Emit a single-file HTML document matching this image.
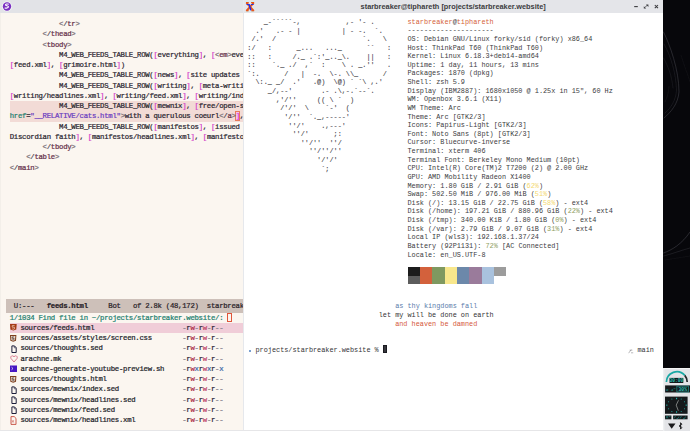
<!DOCTYPE html><html><head><meta charset="utf-8"><style>
*{margin:0;padding:0;box-sizing:border-box}
html,body{width:690px;height:431px;overflow:hidden;background:#09090d}
body{position:relative;font-family:"Liberation Mono",monospace}
.abs{position:absolute}
pre{font-family:"Liberation Mono",monospace;font-size:6.85px;white-space:pre;position:absolute;margin:0}
#emacs pre{-webkit-text-stroke:0.22px currentColor;font-size:7.3px;letter-spacing:-0.273px}
.tb{position:absolute;left:0;top:0;height:12.6px;background:#e4e5e9}
.tg{color:#7a7078}.sl{color:#4a4450}.tn{color:#66304a}.br{color:#d33fc8}.d{color:#2b2630}.at{color:#23806f}.st{color:#6a3cc0}.pm{color:#e030e0}
</style></head><body>

<svg class="abs" style="left:663px;top:0" width="27" height="431" viewBox="663 0 27 431">
<rect x="663" y="0" width="27" height="431" fill="#07070b"/>
<defs><filter id="bl" x="-50%" y="-50%" width="200%" height="200%"><feGaussianBlur stdDeviation="0.6"/></filter></defs><g fill="none" stroke="#4a4a52" stroke-linecap="round" filter="url(#bl)">
<path d="M663.5 32 C670 45, 679 70, 679 92 C678 104, 671 112, 664 118" stroke-width="0.9" opacity="0.55"/>
<path d="M664 44 C671 56, 676 74, 676.5 90 C676 100, 671 108, 665 113" stroke-width="0.6" opacity="0.4"/>
<path d="M663.5 58 C668 66, 672 76, 673 88" stroke-width="0.6" opacity="0.35"/>
<path d="M665 102 C667 98, 669 92, 669 86" stroke-width="0.5" opacity="0.3"/>
<path d="M681 55 C684 65, 688 75, 690 82" stroke-width="0.5" opacity="0.25"/>
<path d="M663.5 253 C672 250, 682 244, 690 232" stroke-width="1" opacity="0.5"/>
<path d="M663.5 256 C672 254, 682 250, 690 248" stroke-width="0.7" opacity="0.45"/>
<path d="M665 260 C673 259, 682 257, 690 256" stroke-width="0.5" opacity="0.25"/>
</g></svg>

<div id="emacs" class="abs" style="left:0;top:0;width:243px;height:431px;background:#fbf6f0;overflow:hidden">
<div class="abs" style="left:0;top:0;width:1.3px;height:431px;background:#f3efe9"></div>
<div class="abs" style="left:9.75px;top:101.1px;width:240px;height:20.7px;background:#f2dbd6"></div>
<div class="abs" style="left:235.3px;top:111.4px;width:4.5px;height:9.2px;background:#f3c4e6;border:0.5px solid #e87a5a"></div>
<pre class="ec" style="left:9.75px;top:19.26px;line-height:10.23px;color:#2b2630">
            <span class="tg">&lt;</span><span class="sl">/</span><span class="tn">tr</span><span class="tg">&gt;</span>
        <span class="tg">&lt;</span><span class="sl">/</span><span class="tn">thead</span><span class="tg">&gt;</span>
        <span class="tg">&lt;</span><span class="tn">tbody</span><span class="tg">&gt;</span>
<span class="d">            M4_WEB_FEEDS_TABLE_ROW(</span><span class="br">[</span><span class="d">everything</span><span class="br">]</span><span class="d">, </span><span class="br">[</span><span class="tg">&lt;</span><span class="tn">em</span><span class="tg">&gt;</span><span class="d">everything</span>
<span class="br">[</span><span class="d">feed.xml</span><span class="br">]</span><span class="d">, </span><span class="br">[</span><span class="d">grimoire.html</span><span class="br">]</span><span class="d">)</span>
<span class="d">            M4_WEB_FEEDS_TABLE_ROW(</span><span class="br">[</span><span class="d">news</span><span class="br">]</span><span class="d">, </span><span class="br">[</span><span class="d">site updates and more</span>
<span class="d">            M4_WEB_FEEDS_TABLE_ROW(</span><span class="br">[</span><span class="d">writing</span><span class="br">]</span><span class="d">, </span><span class="br">[</span><span class="d">meta-writing</span>
<span class="br">[</span><span class="d">writing/headlines.xml</span><span class="br">]</span><span class="d">, </span><span class="br">[</span><span class="d">writing/feed.xml</span><span class="br">]</span><span class="d">, </span><span class="br">[</span><span class="d">writing/index</span>
<span class="d">            M4_WEB_FEEDS_TABLE_ROW(</span><span class="br">[</span><span class="d">mewnix</span><span class="br">]</span><span class="d">, </span><span class="br">[</span><span class="d">free/open-source</span>
<span class="at">href</span><span class="d">=</span><span class="st">"__RELATIVE/cats.html"</span><span class="tg">&gt;</span><span class="d">with a querulous coeurl</span><span class="tg">&lt;</span><span class="sl">/</span><span class="tn">a</span><span class="tg">&gt;</span><span class="pm">]</span><span class="d">,</span>
<span class="d">            M4_WEB_FEEDS_TABLE_ROW(</span><span class="br">[</span><span class="d">manifestos</span><span class="br">]</span><span class="d">, </span><span class="br">[</span><span class="d">issued by</span>
<span class="d">Discordian faith</span><span class="br">]</span><span class="d">, </span><span class="br">[</span><span class="d">manifestos/headlines.xml</span><span class="br">]</span><span class="d">, </span><span class="br">[</span><span class="d">manifestos</span>
        <span class="tg">&lt;</span><span class="sl">/</span><span class="tn">tbody</span><span class="tg">&gt;</span>
    <span class="tg">&lt;</span><span class="sl">/</span><span class="tn">table</span><span class="tg">&gt;</span>
<span class="tg">&lt;</span><span class="sl">/</span><span class="tn">main</span><span class="tg">&gt;</span>
</pre>
<div class="abs" style="left:6.3px;top:298.8px;width:240px;height:13.9px;background:#cdc0b9"></div>
<pre style="left:9.75px;top:300.1px;line-height:13.9px;color:#2a2228"> U:---   <b>feeds.html</b>     Bot   of 2.8k (48,172)  starbreaker</pre>
<pre style="left:9.75px;top:312.7px;line-height:10.23px;color:#23806f">1/1034 Find file in ~/projects/starbreaker.website/: </pre>
<div class="abs" style="left:227.4px;top:312.5px;width:4.3px;height:9px;border:0.8px solid #e0553a"></div>
<div class="abs" style="left:9.75px;top:322.9px;width:240px;height:10.23px;background:#f0cdd8"></div>
<svg class="abs" style="left:10px;top:324.0px" width="7" height="8" viewBox="0 0 7 8"><path d="M0 0.1H6.7L6.3 5.6L3.35 6.5L0.4 5.6Z" fill="#a43a14"/><path d="M4.6 1.6H2.2V3.2H4.4V4.9L3.35 5.3L2.2 4.9" fill="none" stroke="#ecc4b0" stroke-width="0.8"/></svg>
<pre style="left:20.4px;top:322.9px;line-height:10.23px;color:#231f2a">sources/feeds.html</pre>
<pre style="left:182.244px;top:322.9px;line-height:10.23px"><span style="color:#8a8590">-</span><span style="color:#2a2535">r</span><span style="color:#b0304a">w</span><span style="color:#8a8590">-</span><span style="color:#2a2535">r</span><span style="color:#c04a6a">w</span><span style="color:#8a8590">-</span><span style="color:#2a2535">r</span><span style="color:#8a8590">-</span><span style="color:#8a8590">-</span></pre>
<svg class="abs" style="left:10.2px;top:334.63px" width="7" height="8" viewBox="0 0 7 8"><path d="M0 0.1H6.4L6 5.7L3.2 6.7L0.4 5.7Z" fill="#7e3e1c"/><path d="M1.1 1.1H5.3L5 5L3.2 5.7L1.4 5Z" fill="#f6eee8"/><path d="M4.3 1.9H2.2V3.3H4.1V4.6L3.2 4.9L2.3 4.6" fill="none" stroke="#4a2a18" stroke-width="0.75"/></svg>
<pre style="left:20.4px;top:333.13px;line-height:10.23px;color:#231f2a">sources/assets/styles/screen.css</pre>
<pre style="left:182.244px;top:333.13px;line-height:10.23px"><span style="color:#8a8590">-</span><span style="color:#2a2535">r</span><span style="color:#b0304a">w</span><span style="color:#8a8590">-</span><span style="color:#2a2535">r</span><span style="color:#c04a6a">w</span><span style="color:#8a8590">-</span><span style="color:#2a2535">r</span><span style="color:#8a8590">-</span><span style="color:#8a8590">-</span></pre>
<svg class="abs" style="left:10.6px;top:344.65999999999997px" width="7" height="9" viewBox="0 0 7 9"><path d="M0.9 0.9H3.5L5.2 2.6V7.5H0.9Z" fill="none" stroke="#1c1e3a" stroke-width="1"/><path d="M3.3 1V2.8H5" fill="none" stroke="#1c1e3a" stroke-width="0.6"/></svg>
<pre style="left:20.4px;top:343.35999999999996px;line-height:10.23px;color:#231f2a">sources/thoughts.sed</pre>
<pre style="left:182.244px;top:343.35999999999996px;line-height:10.23px"><span style="color:#8a8590">-</span><span style="color:#2a2535">r</span><span style="color:#b0304a">w</span><span style="color:#8a8590">-</span><span style="color:#2a2535">r</span><span style="color:#c04a6a">w</span><span style="color:#8a8590">-</span><span style="color:#2a2535">r</span><span style="color:#8a8590">-</span><span style="color:#8a8590">-</span></pre>
<svg class="abs" style="left:10px;top:354.78999999999996px" width="8" height="8" viewBox="0 0 8 8"><path d="M4 7L1 3.5C0.3 2 1.2 0.8 2.4 0.8C3.2 0.8 3.7 1.3 4 2C4.3 1.3 4.8 0.8 5.6 0.8C6.8 0.8 7.7 2 7 3.5Z" fill="none" stroke="#d0607a" stroke-width="0.8"/></svg>
<pre style="left:20.4px;top:353.59px;line-height:10.23px;color:#231f2a">arachne.mk</pre>
<pre style="left:182.244px;top:353.59px;line-height:10.23px"><span style="color:#8a8590">-</span><span style="color:#2a2535">r</span><span style="color:#b0304a">w</span><span style="color:#8a8590">-</span><span style="color:#2a2535">r</span><span style="color:#c04a6a">w</span><span style="color:#8a8590">-</span><span style="color:#2a2535">r</span><span style="color:#8a8590">-</span><span style="color:#8a8590">-</span></pre>
<svg class="abs" style="left:10px;top:365.02px" width="7" height="8" viewBox="0 0 7 8"><rect x="0" y="0.5" width="7" height="6.5" fill="#4616c2"/><path d="M1.5 2.2L3 3.5L1.5 4.8" fill="none" stroke="#fff" stroke-width="0.7"/></svg>
<pre style="left:20.4px;top:363.82px;line-height:10.23px;color:#231f2a">arachne-generate-youtube-preview.sh</pre>
<pre style="left:182.244px;top:363.82px;line-height:10.23px"><span style="color:#8a8590">-</span><span style="color:#2a2535">r</span><span style="color:#b0304a">w</span><span style="color:#3a68a8">x</span><span style="color:#2a2535">r</span><span style="color:#c04a6a">w</span><span style="color:#3a68a8">x</span><span style="color:#2a2535">r</span><span style="color:#8a8590">-</span><span style="color:#3a68a8">x</span></pre>
<svg class="abs" style="left:10.2px;top:375.54999999999995px" width="7" height="8" viewBox="0 0 7 8"><path d="M0 0.1H6.4L6 5.7L3.2 6.7L0.4 5.7Z" fill="#7e3e1c"/><path d="M1.1 1.1H5.3L5 5L3.2 5.7L1.4 5Z" fill="#f6eee8"/><path d="M4.3 1.9H2.2V3.3H4.1V4.6L3.2 4.9L2.3 4.6" fill="none" stroke="#4a2a18" stroke-width="0.75"/></svg>
<pre style="left:20.4px;top:374.04999999999995px;line-height:10.23px;color:#231f2a">sources/thoughts.html</pre>
<pre style="left:182.244px;top:374.04999999999995px;line-height:10.23px"><span style="color:#8a8590">-</span><span style="color:#2a2535">r</span><span style="color:#b0304a">w</span><span style="color:#8a8590">-</span><span style="color:#2a2535">r</span><span style="color:#c04a6a">w</span><span style="color:#8a8590">-</span><span style="color:#2a2535">r</span><span style="color:#8a8590">-</span><span style="color:#8a8590">-</span></pre>
<svg class="abs" style="left:10.6px;top:385.58px" width="7" height="9" viewBox="0 0 7 9"><path d="M0.9 0.9H3.5L5.2 2.6V7.5H0.9Z" fill="none" stroke="#1c1e3a" stroke-width="1"/><path d="M3.3 1V2.8H5" fill="none" stroke="#1c1e3a" stroke-width="0.6"/></svg>
<pre style="left:20.4px;top:384.28px;line-height:10.23px;color:#231f2a">sources/mewnix/index.sed</pre>
<pre style="left:182.244px;top:384.28px;line-height:10.23px"><span style="color:#8a8590">-</span><span style="color:#2a2535">r</span><span style="color:#b0304a">w</span><span style="color:#8a8590">-</span><span style="color:#2a2535">r</span><span style="color:#c04a6a">w</span><span style="color:#8a8590">-</span><span style="color:#2a2535">r</span><span style="color:#8a8590">-</span><span style="color:#8a8590">-</span></pre>
<svg class="abs" style="left:10.6px;top:395.81px" width="7" height="9" viewBox="0 0 7 9"><path d="M0.9 0.9H3.5L5.2 2.6V7.5H0.9Z" fill="none" stroke="#1c1e3a" stroke-width="1"/><path d="M3.3 1V2.8H5" fill="none" stroke="#1c1e3a" stroke-width="0.6"/></svg>
<pre style="left:20.4px;top:394.51px;line-height:10.23px;color:#231f2a">sources/mewnix/headlines.sed</pre>
<pre style="left:182.244px;top:394.51px;line-height:10.23px"><span style="color:#8a8590">-</span><span style="color:#2a2535">r</span><span style="color:#b0304a">w</span><span style="color:#8a8590">-</span><span style="color:#2a2535">r</span><span style="color:#c04a6a">w</span><span style="color:#8a8590">-</span><span style="color:#2a2535">r</span><span style="color:#8a8590">-</span><span style="color:#8a8590">-</span></pre>
<svg class="abs" style="left:10.6px;top:406.04px" width="7" height="9" viewBox="0 0 7 9"><path d="M0.9 0.9H3.5L5.2 2.6V7.5H0.9Z" fill="none" stroke="#1c1e3a" stroke-width="1"/><path d="M3.3 1V2.8H5" fill="none" stroke="#1c1e3a" stroke-width="0.6"/></svg>
<pre style="left:20.4px;top:404.74px;line-height:10.23px;color:#231f2a">sources/mewnix/feed.sed</pre>
<pre style="left:182.244px;top:404.74px;line-height:10.23px"><span style="color:#8a8590">-</span><span style="color:#2a2535">r</span><span style="color:#b0304a">w</span><span style="color:#8a8590">-</span><span style="color:#2a2535">r</span><span style="color:#c04a6a">w</span><span style="color:#8a8590">-</span><span style="color:#2a2535">r</span><span style="color:#8a8590">-</span><span style="color:#8a8590">-</span></pre>
<svg class="abs" style="left:10.2px;top:415.77px" width="7" height="9" viewBox="0 0 7 9"><path d="M1 0.6H4.2L6 2.4V8.4H1Z" fill="none" stroke="#c4483a" stroke-width="0.9"/><path d="M2.2 4.3L3.7 6.5M3.7 4.3L2.2 6.5" stroke="#c4483a" stroke-width="0.6"/></svg>
<pre style="left:20.4px;top:414.96999999999997px;line-height:10.23px;color:#231f2a">sources/mewnix/headlines.xml</pre>
<pre style="left:182.244px;top:414.96999999999997px;line-height:10.23px"><span style="color:#8a8590">-</span><span style="color:#2a2535">r</span><span style="color:#b0304a">w</span><span style="color:#8a8590">-</span><span style="color:#2a2535">r</span><span style="color:#c04a6a">w</span><span style="color:#8a8590">-</span><span style="color:#2a2535">r</span><span style="color:#8a8590">-</span><span style="color:#8a8590">-</span></pre>
<div class="tb" style="width:243px;background:#e2e3e7"></div>
<svg class="abs" style="left:1px;top:0.3px" width="12" height="12" viewBox="-1 -1 12 12"><circle cx="5" cy="5.5" r="5.1" fill="#f4f4f8"/><circle cx="5" cy="5.5" r="4.2" fill="#7a30c0"/><path d="M6.8 3.3C5.4 2.8 3.4 3 3.5 3.9C3.6 4.8 6.5 4.6 6.5 5.8C6.5 7 4 7.3 2.6 7" fill="none" stroke="#fff" stroke-width="1.1"/></svg>
</div>
<div class="abs" style="left:243px;top:0;width:1.2px;height:431px;background:#e6e8ec"></div>
<div class="abs" style="left:244px;top:0;width:419px;height:431px;background:#ffffff;overflow:hidden">
<div class="tb" style="width:419px"></div>
<svg class="abs" style="left:1.1px;top:0.9px" width="10.6" height="11" viewBox="0.3 0 11 11.4" preserveAspectRatio="none">
<path d="M1.3 0.8H4.5M6.3 0.8H9.8M1.3 10.9H4.5M6.3 10.9H9.8" stroke="#c4f2f6" stroke-width="0.9"/>
<path d="M1.8 1.8L9.3 10.2M9.3 1.8L1.8 10.2" stroke="#e8561a" stroke-width="2"/>
<path d="M1.3 1.6H4.2M6.6 1.6H9.8M1.3 10.2H4.2M6.6 10.2H9.8" stroke="#e8561a" stroke-width="1.1"/>
<path d="M2 3.6H4.3M6.7 3.6H9.2" stroke="#1a2ef0" stroke-width="1.1"/>
<path d="M4.6 3.4L6.3 9.6" stroke="#1a2ef0" stroke-width="1.5"/>
</svg>
<div class="abs" style="left:116.6px;top:1.9px;font:bold 7.37px/10px 'Liberation Sans',sans-serif;color:#3c3c40;white-space:nowrap">starbreaker@tiphareth [projects/starbreaker.website]</div>
<svg class="abs" style="left:388px;top:0px" width="30" height="12" viewBox="0 0 30 12">
<path d="M2.2 6.6H5.8" stroke="#3a3a3e" stroke-width="1.1"/>
<path d="M12.8 7.6L15.4 5" stroke="#3a3a3e" stroke-width="0.8"/>
<path d="M16.4 4.6L14 4.6L16.4 7Z M11.8 8.6L14.2 8.6L11.8 6.2Z" fill="#3a3a3e"/>
<path d="M22.8 5L26 8.2M26 5L22.8 8.2" stroke="#3a3a3e" stroke-width="1.05"/>
</svg>
<pre style="left:3.3000000000000114px;top:18.04px;line-height:8.627px;color:#48484e;-webkit-text-stroke:0.1px #48484e">    _-`````-,           ,- '- .
  .'   .- - |          | - -.  `.
 /.'  /                     `.   \
:/   :      _...   ..._      ``   :
::   :     /._ .`:'_.._\.    ||   :
::    `._ ./  ,`  :    \ . _.''   .
`:.      /   |  -.  \-. \\_      /
  \:._ _/  .'   .@)  \@) ` `\ ,.'
     _/,--'       .- .\,-.`--`.
       ,'/''     (( \ `  )
        /'/'  \    `-'  (
         '/''  `._,-----'
          ''/'    .,---'
           ''/'      ;:
             ''/''  ''/
               ''/''/''
                 '/'/'
                  `;</pre>
<pre style="left:163.473px;top:17.74px;line-height:8.627px;color:#3c3c41"><span style="color:#d55f3a">starbreaker</span>@<span style="color:#d55f3a">tiphareth</span>
---------------------
OS: Debian GNU/Linux forky/sid (forky) x86_64
Host: ThinkPad T60 (ThinkPad T60)
Kernel: Linux 6.18.3+deb14-amd64
Uptime: 1 day, 11 hours, 13 mins
Packages: 1870 (dpkg)
Shell: zsh 5.9
Display (IBM2887): 1680x1050 @ 1.25x in 15", 60 Hz
WM: Openbox 3.6.1 (X11)
WM Theme: Arc
Theme: Arc [GTK2/3]
Icons: Papirus-Light [GTK2/3]
Font: Noto Sans (8pt) [GTK2/3]
Cursor: Bluecurve-inverse
Terminal: xterm 406
Terminal Font: Berkeley Mono Medium (10pt)
CPU: Intel(R) Core(TM)2 T7200 (2) @ 2.00 GHz
GPU: AMD Mobility Radeon X1400
Memory: 1.80 GiB / 2.91 GiB (<span style="color:#f3d86e">62%</span>)
Swap: 502.50 MiB / 976.00 MiB (<span style="color:#f3d86e">51%</span>)
Disk (/): 13.15 GiB / 22.75 GiB (<span style="color:#f3d86e">58%</span>) - ext4
Disk (/home): 197.21 GiB / 880.96 GiB (<span style="color:#8fa060">22%</span>) - ext4
Disk (/tmp): 340.00 KiB / 1.80 GiB (<span style="color:#8fa060">0%</span>) - ext4
Disk (/var): 2.79 GiB / 9.07 GiB (<span style="color:#8fa060">31%</span>) - ext4
Local IP (wls3): 192.168.1.37/24
Battery (92P1131): <span style="color:#8fa060">72%</span> [AC Connected]
Locale: en_US.UTF-8</pre>
<div class="abs" style="left:163.80px;top:267.20px;width:12.35px;height:8.55px;background:#1c1c1c"></div>
<div class="abs" style="left:176.10px;top:267.20px;width:12.35px;height:8.55px;background:#d3613c"></div>
<div class="abs" style="left:188.40px;top:267.20px;width:12.35px;height:8.55px;background:#7f9960"></div>
<div class="abs" style="left:200.70px;top:267.20px;width:12.35px;height:8.55px;background:#f8e78c"></div>
<div class="abs" style="left:213.00px;top:267.20px;width:12.35px;height:8.55px;background:#6c88aa"></div>
<div class="abs" style="left:225.30px;top:267.20px;width:12.35px;height:8.55px;background:#9a7b9b"></div>
<div class="abs" style="left:237.60px;top:267.20px;width:12.35px;height:8.55px;background:#a9c2de"></div>
<div class="abs" style="left:249.90px;top:267.20px;width:12.35px;height:8.55px;background:#9c9c9c"></div>
<div class="abs" style="left:163.80px;top:275.75px;width:12.35px;height:8.50px;background:#5c5c5c"></div>
<div class="abs" style="left:176.10px;top:275.75px;width:12.35px;height:8.50px;background:#d3613c"></div>
<div class="abs" style="left:188.40px;top:275.75px;width:12.35px;height:8.50px;background:#7f9960"></div>
<div class="abs" style="left:200.70px;top:275.75px;width:12.35px;height:8.50px;background:#f8e78c"></div>
<div class="abs" style="left:213.00px;top:275.75px;width:12.35px;height:8.50px;background:#6c88aa"></div>
<div class="abs" style="left:225.30px;top:275.75px;width:12.35px;height:8.50px;background:#9a7b9b"></div>
<div class="abs" style="left:237.60px;top:275.75px;width:12.35px;height:8.50px;background:#a9c2de"></div>
<div class="abs" style="left:249.90px;top:275.75px;width:12.35px;height:8.50px;background:#ffffff"></div>
<pre style="left:151.15px;top:302.43px;line-height:8.627px;color:#5a7cab">as thy kingdoms fall</pre>
<pre style="left:134.72px;top:311.06px;line-height:8.627px;color:#333336">let my will be done on earth</pre>
<pre style="left:151.15px;top:319.69px;line-height:8.627px;color:#d5583a">and heaven be damned</pre>
<pre style="left:11.51px;top:345.57px;line-height:8.627px;color:#333336">projects/starbreaker.website %</pre>
<div class="abs" style="left:5px;top:350.37px;width:1.6px;height:1.6px;background:#7aa0d0"></div>
<div class="abs" style="left:139.00px;top:344.9px;width:3.9px;height:8.1px;background:#36363c;border:0.5px solid #1a1a20"></div>
<pre style="left:393.47px;top:345.57px;line-height:8.627px;color:#333336">main</pre>
<svg class="abs" style="left:383.61px;top:347.77px" width="6" height="6" viewBox="0 0 6 6"><path d="M0.6 5.2L3.2 1.6M1.6 2.2H4.4M3 4.8H5.2" fill="none" stroke="#8a8a8e" stroke-width="0.6"/></svg>
</div>
<svg class="abs" style="left:663px;top:367.5px" width="27" height="64" viewBox="663 367.5 27 64">
<rect x="663" y="367.5" width="27" height="64" fill="#e3e4e7"/>
<rect x="663" y="367.6" width="27" height="1" fill="#f4f5f7"/><rect x="663" y="367.5" width="1.4" height="64" fill="#eeeff1"/>
<path d="M666.4 381.6 A10.4 10.4 0 0 1 684.77 374.92" fill="none" stroke="#1aa8a4" stroke-width="1.7"/>
<path d="M684.77 374.92 A10.4 10.4 0 0 1 687.2 381.6" fill="none" stroke="#202628" stroke-width="1.7"/>
<rect x="669.5" y="377.4" width="13.8" height="5.1" fill="#15191b"/>
<text x="676.4" y="381.7" font-family="Liberation Mono" font-size="4.6" fill="#2cc0b8" text-anchor="middle" font-weight="bold">30:00</text>
<rect x="665.1" y="384.9" width="24.9" height="7.1" fill="#15191b"/>
<text x="666" y="390.3" font-family="Liberation Mono" font-size="4.4" fill="#1e9a94">&#x2300; 4"</text>
<rect x="676.9" y="385.6" width="11.8" height="5.9" fill="none" stroke="#23b5ae" stroke-width="0.55"/>
<text x="682.8" y="390.4" font-family="Liberation Mono" font-size="4.8" fill="#2cc0b8" text-anchor="middle" font-weight="bold">30%</text>
<rect x="665" y="396.1" width="22.6" height="17.2" fill="#15191b"/>
<g fill="#23b5ae"><rect x="676" y="397.3" width="1.1" height="1.4"/><rect x="676" y="410.8" width="1.1" height="1.4"/><rect x="666.2" y="404.1" width="1.2" height="1.1"/><rect x="685.6" y="404.1" width="1.2" height="1.1"/>
<circle cx="681.2" cy="398.5" r="0.5"/><circle cx="684.5" cy="401.2" r="0.5"/><circle cx="684.5" cy="408.2" r="0.5"/><circle cx="681.2" cy="411" r="0.5"/><circle cx="671.9" cy="411" r="0.5"/><circle cx="668.6" cy="408.2" r="0.5"/><circle cx="668.6" cy="401.2" r="0.5"/><circle cx="671.9" cy="398.5" r="0.5"/></g>
<path d="M678.5 399.8L676.2 404.6L678.3 410.2" stroke="#a8aaa8" stroke-width="0.7" fill="none"/>
<rect x="665" y="415" width="6.4" height="3.8" fill="#15191b"/>
<rect x="673.1" y="415" width="14.5" height="3.8" fill="#15191b"/>
<path d="M666 418l1-2.5 1 2.5M668.7 416h1.8M674 418l1.5-2.5M676.5 418h1.5l1-2M680 418l1.5-2.5M683 418h1.5l1-2" stroke="#23b5ae" stroke-width="0.45" fill="none"/>
<path d="M668 423L675.5 423L671.7 428.3Z" fill="#1a1a1c"/>
<path d="M679.1 424.6L682 427.1L680.5 428.6V422.2L682 423.7L679.1 426.3" fill="none" stroke="#1a1a1c" stroke-width="0.9"/>
</svg>
<div class="abs" style="left:0;top:430.2px;width:663px;height:0.8px;background:#e6e6e8"></div>
</body></html>
